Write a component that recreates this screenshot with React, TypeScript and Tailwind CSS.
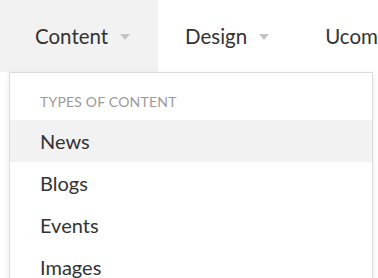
import React from "react";

const font = { fontFamily: "Lato, 'Open Sans', sans-serif" };

const Caret = () => (
  <svg width="10" height="6" viewBox="0 0 10 6" className="ml-[12px] mt-[2px] shrink-0">
    <path d="M0 0 L10 0 L5 6 Z" fill="#c4c4c4" />
  </svg>
);

const items = ["News", "Blogs", "Events", "Images"];

export default function App() {
  return (
    <div className="relative w-[378px] h-[278px] overflow-hidden bg-white" style={font}>
      <nav className="flex h-[72px] items-stretch text-[20.5px] text-[#333]">
        <div className="flex shrink-0 items-center w-[158px] pl-[35px] bg-[#f2f2f2]">
          <span>Content</span>
          <Caret />
        </div>
        <div className="flex shrink-0 items-center pl-[27px]">
          <span>Design</span>
          <Caret />
        </div>
        <div className="flex shrink-0 items-center pl-[56px] whitespace-nowrap">
          <span>Ucoming</span>
        </div>
      </nav>

      <div className="absolute left-[9px] top-[72px] w-[364px] h-[220px] bg-white border border-[#dcdcdc] shadow-[0_2px_8px_rgba(0,0,0,0.08)]">
        <div className="h-[47px] pl-[30px] pt-[21px] text-[14px] tracking-[0.2px] uppercase text-[#9a9a9a] leading-[16px]">
          Types of content
        </div>
        <ul className="text-[20px] text-[#333]">
          {items.map((it, i) => (
            <li
              key={it}
              className={`h-[42px] flex items-center pl-[30px] ${i === 0 ? "bg-[#f2f2f2]" : ""}`}
            >
              {it}
            </li>
          ))}
        </ul>
      </div>
    </div>
  );
}
